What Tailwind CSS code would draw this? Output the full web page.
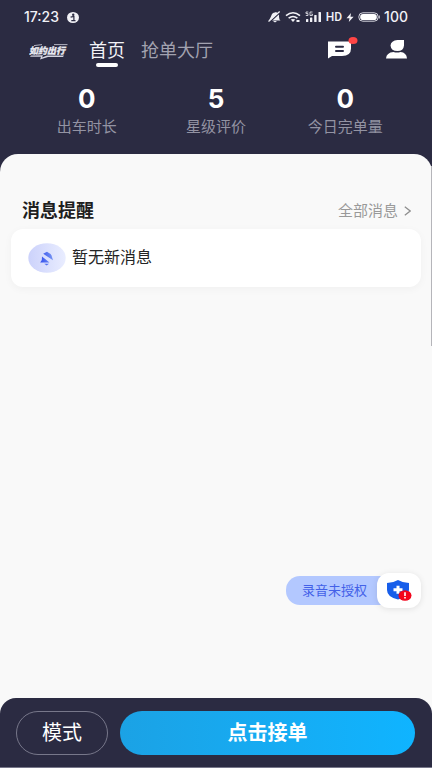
<!DOCTYPE html>
<html lang="zh-CN">
<head>
<meta charset="utf-8">
<meta name="viewport" content="width=device-width, initial-scale=1">
<title>首页</title>
<script src="https://cdn.jsdelivr.net/npm/@tailwindcss/browser@4"></script>
</head>
<body class="bg-[#2b2b42] font-['Liberation_Sans','Noto_Sans_CJK_SC',sans-serif]">
<div class="relative flex min-h-screen flex-col">
  <header class="text-white">
    <div class="flex h-[34px] items-center justify-between px-6 font-['Inter','Noto_Sans_CJK_SC',sans-serif] text-sm font-medium text-[#f1f1f6]">
      <div class="flex items-center gap-2">
        <span>17:23</span>
        <svg class="h-[11px] w-3" viewBox="0 0 12 11" aria-hidden="true"><ellipse cx="6" cy="5.5" rx="6" ry="5.5" fill="#f1f1f6"/><circle cx="6.2" cy="2.7" r="1.2" fill="#2b2b42"/><path d="M3.6 5.2 6.9 4.4v4M4.3 8.7h4.2" fill="none" stroke="#2b2b42" stroke-width="1.2"/></svg>
      </div>
      <div class="flex items-center gap-1">
        <svg class="h-3 w-[13px]" viewBox="0 0 13 12" aria-hidden="true"><path d="M1.5 8.5 3 5.5Q4 1.500 7 1.500L8 1l1 .8Q11.500 3 11 5.800L11.500 8.500l1 1H1ZM5 10h4l-2 1.500Z" fill="#f1f1f6"/><path d="M1 11.500 12 1.500" stroke="#2b2b42" stroke-width="1.600"/><path d="M.5 10.500 11.700.5" stroke="#f1f1f6" stroke-width="1.300"/></svg>
        <svg class="h-3 w-4" viewBox="0 0 16 12" aria-hidden="true"><g fill="none" stroke="#f1f1f6" stroke-width="1.600"><path d="M1 4.600Q8-1 15 4.600M3.600 7.200Q8 3.800 12.400 7.200"/></g><path d="M5.700 8.600Q8 7.200 10.300 8.600L8 11ZM11.500 9h3v2h-3Z" fill="#f1f1f6"/></svg>
        <svg class="h-3 w-[17px]" viewBox="0 0 17 12" aria-hidden="true"><g fill="#f1f1f6"><rect x="1" y="8" width="2.300" height="3" rx=".6"/><rect x="5" y="6.500" width="2.300" height="4.500" rx=".6"/><rect x="9.200" y="4" width="2.400" height="7" rx=".6"/><rect x="13.500" y="1" width="2.500" height="10" rx=".6"/></g><path d="M3.300 1H1v1.600h2v1.900H.8M7.500 1H5v3.500h2.400V3H6.300" fill="none" stroke="#f1f1f6" stroke-width=".8"/></svg>
        <span class="font-['Roboto',sans-serif] text-xs">HD</span>
        <svg class="h-[9px] w-2" viewBox="0 0 8 9" aria-hidden="true"><path d="M5 0 .5 5.200h3L2.800 9 7.600 3.700H4.500Z" fill="#f1f1f6"/></svg>
        <svg class="h-[10px] w-[22px]" viewBox="0 0 22 10" aria-hidden="true"><rect x=".8" y=".8" width="19.400" height="8.400" rx="4" fill="none" stroke="#d7d7e0"/><rect x="2.200" y="2" width="16.600" height="6" rx="2.800" fill="#fff"/><path d="M21.300 3.500v3" stroke="#d7d7e0"/></svg>
        <span>100</span>
      </div>
    </div>

    <nav class="flex h-[34px] items-center pl-[29px] pr-6">
      <svg class="h-[18px] w-10 shrink-0" viewBox="0 0 40 18" role="img" aria-label="如约出行">
        <text x="0" y="12" font-size="9" font-weight="900" font-style="italic" font-family="Noto Sans CJK SC" fill="#e8e8ef" stroke="#e8e8ef" stroke-width=".3">如约出行</text>
        <path d="M2 13.500 14 13.300 13 15.500 18 13.500H35l-1 1.400H19l-8 2.600 1-2.800H1Z" fill="#d4d4df"/>
        <path d="M5 3.600 13 2.600M25 2.600H38.500" fill="none" stroke="#d4d4df" stroke-width=".8"/>
      </svg>
      <a href="#" aria-current="page" class="relative ml-5 text-lg leading-8 text-[#f3f3f7]">首页<span class="absolute bottom-0 left-1/2 h-1 w-[22px] -translate-x-1/2 rounded-full bg-white"></span></a>
      <a href="#" class="ml-4 text-lg leading-8 text-[#a2a2b0]">抢单大厅</a>
      <button type="button" aria-label="消息" class="mb-1 ml-auto h-6 w-[30px]">
        <svg class="h-6 w-[30px]" viewBox="0 0 30 24" aria-hidden="true"><path d="M0 4.500H23V11.500Q23 19 14 19H4L0 21.500Z" fill="#fff"/><path d="M8 9.800h7M8 14h7" stroke="#2b2b42" stroke-width="2" stroke-linecap="round"/><ellipse cx="25" cy="3.500" rx="4.500" ry="3.500" fill="#ff4545"/></svg>
      </button>
      <button type="button" aria-label="我的" class="mb-1 ml-7 h-5 w-[22px]">
        <svg class="h-5 w-[22px]" viewBox="0 0 22 20" aria-hidden="true"><path d="M11.500 1H18V6.500Q17.500 12 11.500 12 5 12 4.500 6.500 5 1.500 11.500 1ZM0 19.500Q.5 13.500 7.500 13 11 14.200 14.500 13 20.500 13.500 21 19.500Z" fill="#fff"/></svg>
      </button>
    </nav>

    <dl class="grid grid-cols-3 pb-[14px] pl-[22px] pr-[22px] pt-4 text-center">
      <div class="flex flex-col-reverse"><dt class="whitespace-nowrap text-[15px] leading-[26px] text-[#9393a3]">出车时长</dt><dd class="font-['Inter',sans-serif] text-[26px] font-bold leading-[30px]">0</dd></div>
      <div class="flex flex-col-reverse"><dt class="whitespace-nowrap text-[15px] leading-[26px] text-[#9393a3]">星级评价</dt><dd class="font-['Inter',sans-serif] text-[26px] font-bold leading-[30px]">5</dd></div>
      <div class="flex flex-col-reverse"><dt class="whitespace-nowrap text-[15px] leading-[26px] text-[#9393a3]">今日完单量</dt><dd class="font-['Inter',sans-serif] text-[26px] font-bold leading-[30px]">0</dd></div>
    </dl>
  </header>

  <div class="flex flex-1 flex-col bg-[linear-gradient(#2b2b42_0_20px,#f9f9f9_20px)]">
    <main class="flex flex-1 flex-col rounded-t-[18px] bg-[#f9f9f9] px-[11px] pt-[45px]">
      <div class="flex h-6 items-center justify-between pl-[11px] pr-[10px]">
        <h1 class="text-lg font-bold leading-6 text-[#1f1f1f]">消息提醒</h1>
        <a href="#" class="flex items-center gap-1.5 text-[15px] leading-6 text-[#999]">全部消息
          <svg class="h-[10px] w-[7px]" viewBox="0 0 7 10" fill="none" stroke="#8d8d8d" stroke-width="1.200" aria-hidden="true"><path d="M.8.8 6.200 5 .8 9.200"/></svg>
        </a>
      </div>
      <section class="mt-1.5 flex h-[58px] items-center gap-1.5 rounded-xl bg-white px-[17px] shadow-[0_2px_8px_rgba(0,0,0,0.04)]">
        <svg class="h-[30px] w-[38px]" viewBox="0 0 38 30" aria-hidden="true">
          <defs><linearGradient id="halo"><stop stop-color="#ccd2fb"/><stop offset="1" stop-color="#e9edff"/></linearGradient><linearGradient id="bell"><stop stop-color="#3450ee"/><stop offset="1" stop-color="#7895f2"/></linearGradient></defs>
          <ellipse cx="19" cy="15" rx="18.700" ry="14.800" fill="url(#halo)"/>
          <path d="M15.200 10.800 17.500 9.500 19 8.800 20.500 9.700Q23.500 11 24 14L25 17.200ZM14 13.500 21.500 19.500H12.200L13.800 17ZM16.300 20.700H21L18.700 22.600Z" fill="url(#bell)"/>
        </svg>
        <p class="text-base text-[#242424]">暂无新消息</p>
      </section>
      <button type="button" class="-mr-[11px] mb-[90px] mt-auto flex items-center self-end pr-[11px]">
        <span class="-mr-3 flex h-[29px] items-center rounded-l-[14px] bg-[#b3c8ff] pl-4 pr-[22px] text-[13px] text-[#4361e8]">录音未授权</span>
        <span class="flex h-[35px] w-11 items-center justify-center rounded-xl bg-white shadow-[0_1px_6px_rgba(0,0,0,0.1)]">
          <svg class="h-[22px] w-[26px]" viewBox="0 0 26 22" aria-hidden="true"><path d="M12 0Q17 3 23 3V10Q23 17 12 19.500 1 17 1 10V3Q7 3 12 0Z" fill="#175eea"/><path d="M12 5.800v8M7.500 9.800h9" stroke="#fff" stroke-width="3"/><ellipse cx="19" cy="15.500" rx="6.500" ry="5.300" fill="#f3051c"/><path d="M19 12.300v3.600M19 17v1.500" stroke="#fff" stroke-width="1.600"/></svg>
        </span>
      </button>
    </main>
    <footer class="flex gap-3 rounded-t-2xl border-b border-[#77778a] bg-[#2b2b42] pb-3 pl-4 pr-[17px] pt-[13px]">
      <button type="button" class="h-11 w-[92px] shrink-0 rounded-full border border-[#77778a] text-xl text-white">模式</button>
      <button type="button" class="h-11 flex-1 rounded-full bg-linear-to-r from-[#1ba2e5] to-[#0fb4ff] text-xl font-bold text-white">点击接单</button>
    </footer>
  </div>
  <div class="absolute right-0 top-[166px] h-[180px] w-px bg-[#b5b5ba]" aria-hidden="true"></div>
</div>
</body>
</html>
